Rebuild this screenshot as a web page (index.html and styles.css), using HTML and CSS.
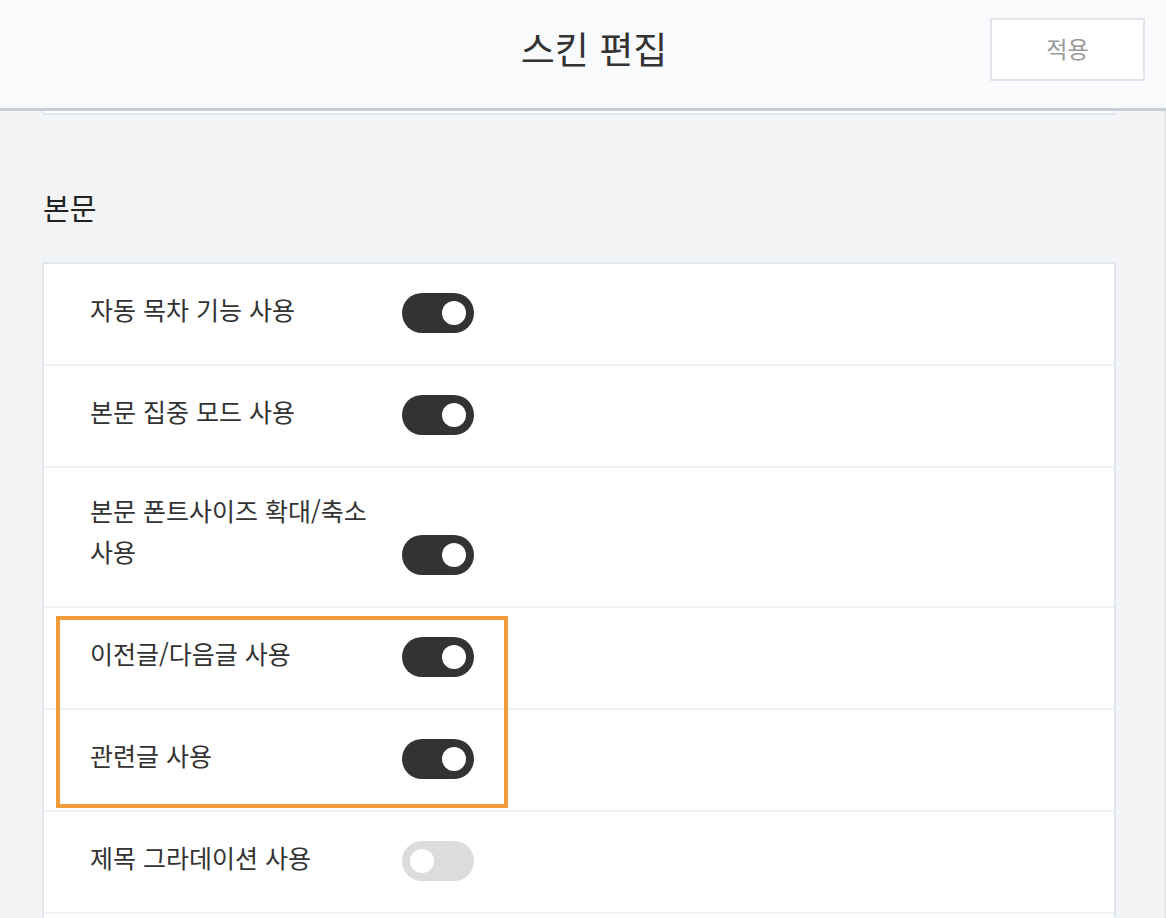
FILE: index.html
```html
<!DOCTYPE html>
<html lang="ko">
<head>
  <meta charset="UTF-8">
  <meta name="viewport" content="width=device-width, initial-scale=1.0">
  <title>스킨 편집</title>
  <link rel="stylesheet" href="styles.css">
</head>
<body>
  <header class="top-bar">
    <h1 class="top-title">스킨 편집</h1>
    <button class="apply-btn">적용</button>
  </header>

  <main class="editor">
    <div class="prev-card"></div>

    <h2 class="section-title">본문</h2>

    <div class="option-card">
      <div class="option-row">
        <span class="option-label">자동 목차 기능 사용</span>
        <span class="switch on"></span>
      </div>
      <div class="option-row">
        <span class="option-label">본문 집중 모드 사용</span>
        <span class="switch on"></span>
      </div>
      <div class="option-row two-line">
        <span class="option-label">본문 폰트사이즈 확대/축소 사용</span>
        <span class="switch on"></span>
      </div>

      <!-- highlighted pair -->
      <div class="highlight-group">
        <div class="option-row">
          <span class="option-label">이전글/다음글 사용</span>
          <span class="switch on"></span>
        </div>
        <div class="option-row">
          <span class="option-label">관련글 사용</span>
          <span class="switch on"></span>
        </div>
      </div>

      <div class="option-row">
        <span class="option-label">제목 그라데이션 사용</span>
        <span class="switch"></span>
      </div>
      <div class="option-row"></div>
    </div>
  </main>
</body>
</html>
```

FILE: styles.css
```css
html, body {
  margin: 0;
  padding: 0;
}

body {
  background: #f3f4f6;
  font-family: "Noto Sans CJK KR", "Noto Sans", sans-serif;
  color: #333;
  height: 918px;
  overflow: hidden;
}

.top-bar {
  height: 108px;
  background: #f9fafc;
  border-bottom: 3px solid #c6cdd6;
  display: flex;
  align-items: center;
  padding-left: 22px;
  position: relative;
}

.top-title {
  flex: 1;
  margin: 0;
  margin-top: -13px;
  text-align: center;
  font-size: 37px;
  font-weight: 400;
  color: #333;
}

.apply-btn {
  position: absolute;
  top: 18px;
  right: 21px;
  width: 155px;
  height: 63px;
  padding: 0 0 4px;
  background: #fff;
  border: 2px solid #e1e5eb;
  font-family: inherit;
  font-size: 23px;
  color: #999;
  cursor: pointer;
}

.editor {
  padding: 0 48px 0 42px;
  border-right: 2px solid #e6e7e9;
  min-height: 900px;
}

.prev-card {
  height: 2px;
  background: #fff;
  border: 2px solid #e3e7ee;
  border-top: none;
}

.section-title {
  margin: 71px 0 34px 1px;
  font-size: 29px;
  font-weight: 400;
  line-height: 42px;
  color: #222;
}

.option-card {
  background: #fff;
  border: 2px solid #e2e6ed;
  border-bottom: none;
}

.option-row {
  display: flex;
  align-items: flex-end;
  padding: 25px 46px 34px;
  border-bottom: 2px solid #eff1f4;
  min-height: 41px;
}

.option-row.two-line {
  padding-top: 22px;
  padding-bottom: 34px;
}

.option-label {
  flex: 0 0 300px;
  margin-right: 12px;
  font-size: 25px;
  line-height: 41px;
  color: #333;
  word-break: keep-all;
}

.switch {
  position: relative;
  flex: 0 0 72px;
  height: 40px;
  border-radius: 20px;
  background: #dcdcdc;
  margin-bottom: -3px;
}

.switch::after {
  content: "";
  position: absolute;
  top: 8px;
  left: 8px;
  width: 24px;
  height: 24px;
  border-radius: 50%;
  background: #fff;
}

.switch.on {
  background: #333;
}

.switch.on::after {
  left: 40px;
}

.highlight-group {
  position: relative;
}

.highlight-group::after {
  content: "";
  position: absolute;
  top: 8px;
  bottom: 4px;
  left: 12px;
  width: 444px;
  border: 4px solid #ef9a3b;
  pointer-events: none;
}
```
